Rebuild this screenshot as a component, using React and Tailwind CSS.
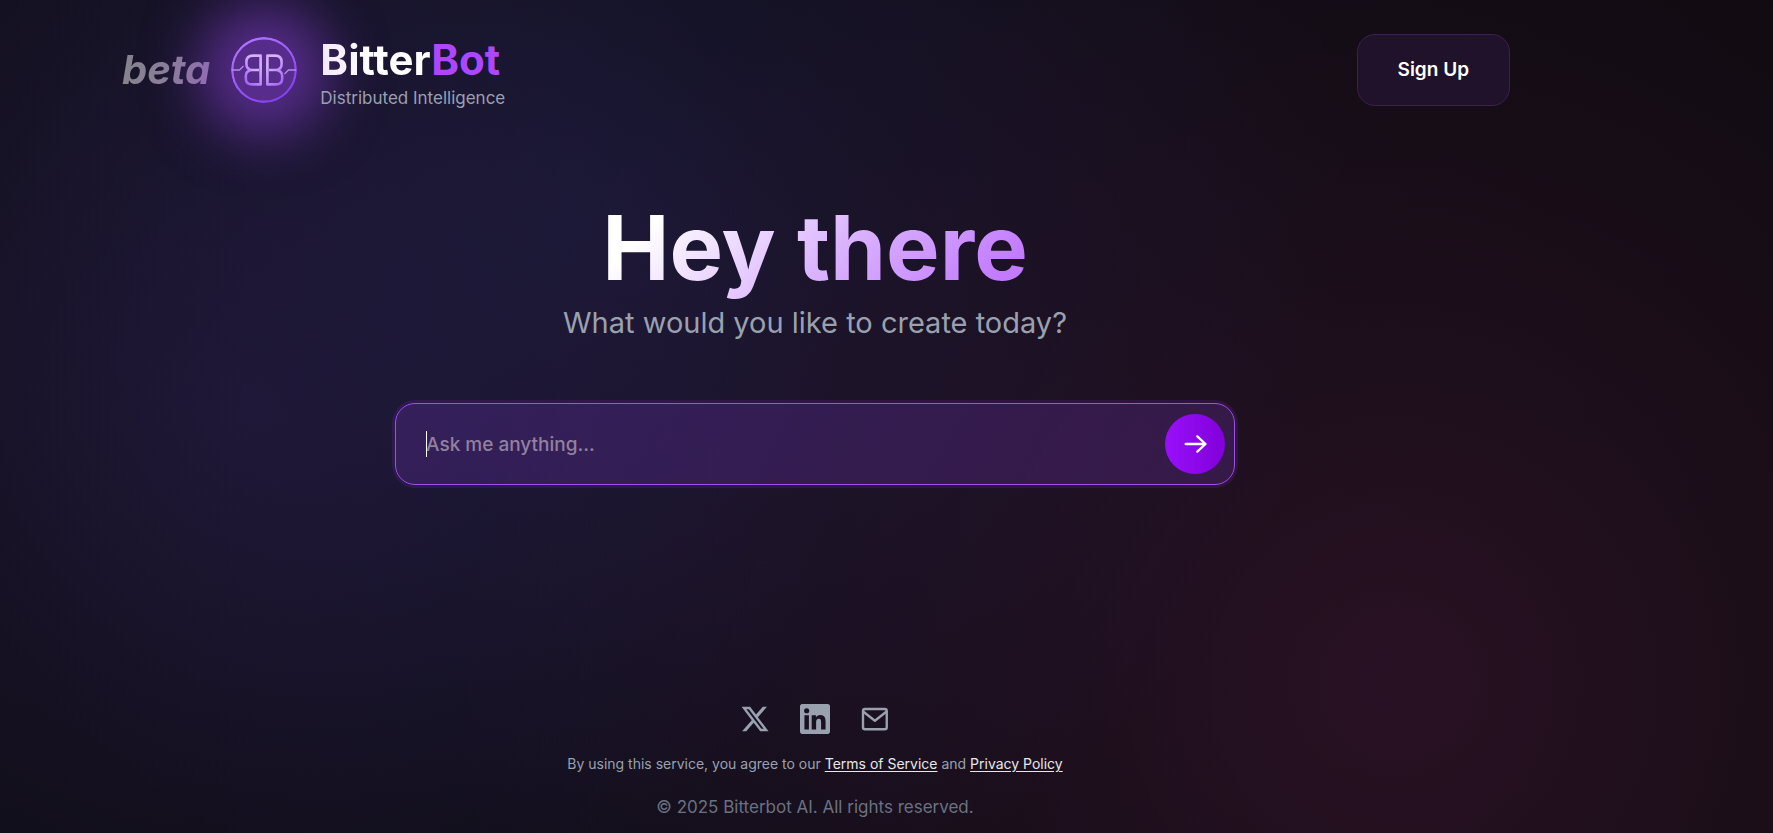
import React from "react";

function Logo() {
  const b =
    "M36.4 18.6 H44 C48.2 18.6 50.6 21 50.6 25 V27 C50.6 30 49 32.2 46 33 C49.2 33.8 51.2 36 51.2 39 V41.4 C51.2 45.2 48.6 47.4 44.6 47.4 H36.4 Z";
  return (
    <svg viewBox="0 0 66 66" className="size-[66px] rounded-full bg-[#8a40d8]/55 shadow-[0_0_56px_32px_rgba(138,64,216,0.55)]" fill="none" aria-hidden="true">
      <defs>
        <linearGradient id="ring" x1="0" y1="0" x2="0.6" y2="1">
          <stop offset="0" stopColor="#b67bff" />
          <stop offset="1" stopColor="#8441f0" />
        </linearGradient>
        <linearGradient id="letters" x1="14" y1="17" x2="50" y2="50" gradientUnits="userSpaceOnUse">
          <stop offset="0" stopColor="#cf8df5" />
          <stop offset="0.5" stopColor="#d8b4fe" />
          <stop offset="1" stopColor="#9d5cf5" />
        </linearGradient>
      </defs>
      <circle cx="33" cy="33" r="31.8" stroke="url(#ring)" strokeWidth="2.4" />
      <g stroke="url(#letters)" strokeWidth="2.6" strokeLinejoin="round">
        <path d={b} />
        <path d="M38 33 H46" />
        <path d={b} transform="matrix(-1 0 0 1 66 0)" />
        <path d="M28 33 H20" />
      </g>
      <path d="M1 33 H8.5 L12.5 29" stroke="#b48be8" strokeWidth="1.3" />
      <path d="M65 33 H57.5 L53.5 37" stroke="#b48be8" strokeWidth="1.3" />
    </svg>
  );
}

function Header() {
  return (
    <header className="mx-auto flex w-full max-w-[1390px] items-center justify-between py-[26px]">
      <div className="flex items-center gap-[21px]">
        <span className="bg-linear-to-r from-[#85828d] to-[#9180a3] bg-clip-text pl-0.5 text-[40px] leading-[48px] font-bold text-transparent italic">
          beta
        </span>
        <Logo />
        <div className="flex flex-col pt-3 pl-0.5">
          <p className="text-[42px] leading-[44px] font-bold">
            <span className="bg-linear-to-r from-[#f3e8ff] via-white to-white bg-clip-text text-transparent">Bitter</span>
            <span className="text-[#ad46ff]">Bot</span>
          </p>
          <p className="text-[17px] leading-8 text-[#99a1af]">Distributed Intelligence</p>
        </div>
      </div>
      <button type="button" className="h-[72px] rounded-[18px] border border-[#3d2050] bg-[#21122b] px-10 text-[19px] font-semibold text-white">
        Sign Up
      </button>
    </header>
  );
}

function Prompt() {
  return (
    <form
      onSubmit={(e) => e.preventDefault()}
      className="relative mt-[60px] flex w-full max-w-[840px] items-center rounded-[20px] border border-[#9a52e8] bg-[#9040ea]/20 py-[10px] pr-[9px] pl-[30px] shadow-[0_0_0_3px_rgba(126,34,206,0.18)]"
    >
      <input
        id="prompt"
        type="text"
        aria-label="Ask me anything"
        placeholder="Ask me anything..."
        className="h-[60px] min-w-0 flex-1 bg-transparent text-[19px] font-medium text-white outline-none placeholder:text-[#93809f]"
      />
      <span className="absolute left-[30px] h-[26px] w-px bg-white" />
      <button type="submit" aria-label="Send" className="flex size-[60px] items-center justify-center rounded-full bg-linear-to-r from-[#9810fa] to-[#8200db]">
        <svg viewBox="0 0 24 24" className="size-7" fill="none" stroke="#fff" strokeWidth="2" strokeLinecap="round" strokeLinejoin="round" aria-hidden="true">
          <path d="M4 12h17M14 5.5l7 6.5-7 6.5" />
        </svg>
      </button>
    </form>
  );
}

function Footer() {
  return (
    <footer className="flex flex-col items-center">
      <div className="flex gap-[30px] text-[#99a1af]">
        <a href="#x" aria-label="X">
          <svg viewBox="0 0 24 24" className="size-[30px]" fill="currentColor">
            <path d="M18.244 2.25h3.308l-7.227 8.26 8.502 11.24H16.17l-5.214-6.817L4.99 21.75H1.68l7.73-8.835L1.254 2.25H8.08l4.713 6.231zm-1.161 17.52h1.833L7.084 4.126H5.117z" />
          </svg>
        </a>
        <a href="#linkedin" aria-label="LinkedIn">
          <svg viewBox="0 0 24 24" className="size-[30px]" fill="currentColor">
            <path d="M20.447 20.452h-3.554v-5.569c0-1.328-.027-3.037-1.852-3.037-1.853 0-2.136 1.445-2.136 2.939v5.667H9.351V9h3.414v1.561h.046c.477-.9 1.637-1.85 3.37-1.85 3.601 0 4.267 2.37 4.267 5.455v6.286zM5.337 7.433a2.062 2.062 0 0 1-2.063-2.065 2.064 2.064 0 1 1 2.063 2.065zm1.782 13.019H3.555V9h3.564v11.452zM22.225 0H1.771C.792 0 0 .774 0 1.729v20.542C0 23.227.792 24 1.771 24h20.451C23.2 24 24 23.227 24 22.271V1.729C24 .774 23.2 0 22.222 0h.003z" />
          </svg>
        </a>
        <a href="#mail" aria-label="Email">
          <svg viewBox="0 0 24 24" className="size-[30px]" fill="none" stroke="currentColor" strokeWidth="1.9" strokeLinecap="round" strokeLinejoin="round">
            <rect x="2.4" y="4" width="19" height="16.2" rx="1.6" />
            <path d="M3 6.4l8.9 7 8.9-7" />
          </svg>
        </a>
      </div>
      <p className="mt-[18px] text-[14px] leading-6 text-[#99a1af]">
        By using this service, you agree to our{" "}
        <a href="#terms" className="text-[#e5e7eb] underline underline-offset-2">Terms of Service</a> and{" "}
        <a href="#privacy" className="text-[#e5e7eb] underline underline-offset-2">Privacy Policy</a>
      </p>
      <p className="mt-[18px] text-[17px] leading-[26px] text-[#6a7282]">© 2025 Bitterbot AI. All rights reserved.</p>
    </footer>
  );
}

export default function App() {
  return (
    <div className="flex min-h-screen flex-col overflow-hidden bg-[#0d0b0f] bg-[radial-gradient(circle_at_14%_50%,rgba(129,80,240,0.1),transparent_600px),radial-gradient(circle_at_79%_82%,rgba(226,62,165,0.135),rgba(226,62,165,0.075)_350px,rgba(226,62,165,0.03)_700px,transparent_950px),radial-gradient(circle_at_34%_24%,rgba(95,90,241,0.13),transparent_750px),linear-gradient(to_right,#100e18,#0d0b12_55%,#0c0a0e)] pr-[143px] font-['Inter','Liberation_Sans',sans-serif] text-white">
      <Header />
      <main className="flex flex-1 flex-col items-center pt-[54px]">
        <h1 className="bg-linear-[135deg] from-white from-15% via-[#dab2ff] via-55% to-[#c27aff] to-90% bg-clip-text text-[90px] leading-[108px] font-bold text-transparent">
          Hey there
        </h1>
        <p className="mt-px text-[29px] leading-10 text-[#99a1af]">What would you like to create today?</p>
        <Prompt />
      </main>
      <Footer />
      <div className="mt-2 h-[5px]" />
    </div>
  );
}
